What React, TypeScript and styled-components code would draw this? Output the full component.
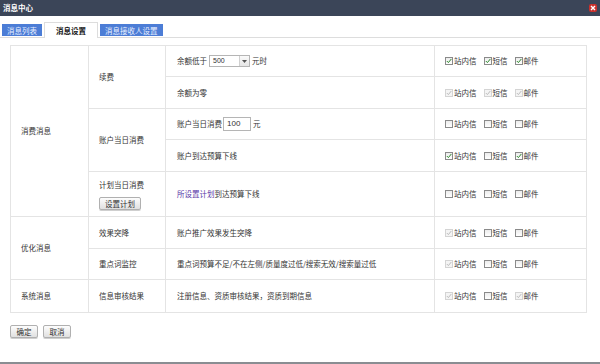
import React from 'react';
import styled, { createGlobalStyle } from 'styled-components';

const GlobalStyle = createGlobalStyle`
  html, body {
    margin: 0;
    padding: 0;
    background: #ffffff;
  }
  body {
    font-family: "Noto Sans CJK SC", "Liberation Sans", sans-serif;
    font-size: 7.5px;
    color: #333333;
  }
`;

const Page = styled.div`
  width: 600px;
  height: 364px;
  display: flex;
  flex-direction: column;
  overflow: hidden;
`;

const TitleBar = styled.div`
  height: 16px;
  background: #3b4558;
  display: flex;
  align-items: center;
  justify-content: space-between;
  padding: 0 3px 0 3px;
`;

const Title = styled.span`
  color: #ffffff;
  font-weight: bold;
  font-size: 7.5px;
  line-height: 16px;
`;

const CloseButton = styled.span`
  width: 8px;
  height: 8px;
  border-radius: 2px;
  background: #c9302c;
  display: flex;
  align-items: center;
  justify-content: center;
`;

const TabBar = styled.div`
  margin-top: 6px;
  height: 15px;
  display: flex;
  align-items: flex-end;
  gap: 2px;
  padding-left: 2px;
  border-bottom: 1px solid #dddddd;
`;

const Tab = styled.div<{ $active?: boolean }>`
  height: ${(p) => (p.$active ? '16px' : '12px')};
  margin-bottom: ${(p) => (p.$active ? '-1px' : '1px')};
  padding: 0 ${(p) => (p.$active ? '11px' : '5px')};
  display: flex;
  align-items: center;
  font-size: 7.5px;
  background: ${(p) => (p.$active ? '#ffffff' : '#4c7dd6')};
  color: ${(p) => (p.$active ? '#111111' : '#e8efff')};
  font-weight: ${(p) => (p.$active ? 'bold' : 'normal')};
  border: ${(p) => (p.$active ? '1px solid #dddddd' : 'none')};
  border-bottom: none;
  box-sizing: border-box;
`;

const Content = styled.div`
  padding: 7px 14px 0 10px;
`;

const Table = styled.table`
  width: 576px;
  border-collapse: collapse;
  border: 1px solid #e4e4e4;
  table-layout: fixed;
`;

const Row = styled.tr<{ $h: number }>`
  height: ${(p) => p.$h}px;
`;

const Cell = styled.td<{ $pl?: number }>`
  border: 1px solid #e4e4e4;
  padding: 0 0 0 ${(p) => p.$pl ?? 10}px;
  vertical-align: middle;
  line-height: 12px;
  white-space: nowrap;
`;

const Inline = styled.div`
  display: flex;
  align-items: center;
`;

const SelectBox = styled.div`
  width: 41px;
  height: 12px;
  box-sizing: border-box;
  border: 1px solid #b5b5b5;
  margin: 0 2px 0 2px;
  display: flex;
  align-items: center;
  background: #fff;
`;

const SelectValue = styled.span`
  flex: 1;
  padding-left: 3px;
  font-size: 7px;
  font-family: "Liberation Sans", sans-serif;
`;

const SelectArrow = styled.span`
  width: 9px;
  height: 100%;
  border-left: 1px solid #d0d0d0;
  background: linear-gradient(#fafafa, #e6e6e6);
  display: flex;
  align-items: center;
  justify-content: center;
`;

const TextInput = styled.div`
  width: 28px;
  height: 14px;
  box-sizing: border-box;
  border: 1px solid #b5b5b5;
  margin: 0 2px 0 1px;
  padding-left: 3px;
  display: flex;
  align-items: center;
  font-family: "Liberation Sans", sans-serif;
  font-size: 8px;
`;

const Link = styled.span`
  color: #5a3aa8;
`;

const SmallButton = styled.button<{ $w?: number }>`
  font-family: "Noto Sans CJK SC", sans-serif;
  font-size: 7.5px;
  color: #333;
  padding: 0;
  height: 13px;
  width: ${(p) => p.$w ?? 28}px;
  border: 1px solid #b0b0b0;
  border-radius: 2px;
  background: linear-gradient(#fdfdfd, #e0e0e0);
  box-shadow: 0 1px 0 #cfcfcf;
  line-height: 11px;
`;

const PlanStack = styled.div`
  display: flex;
  flex-direction: column;
  align-items: flex-start;
  gap: 6px;
`;

const ChannelGroup = styled.div`
  display: flex;
  align-items: center;
  gap: 7px;
`;

const Channel = styled.label`
  display: flex;
  align-items: center;
  gap: 1px;
  color: #333;
`;

const Box = styled.span<{ $disabled?: boolean }>`
  width: 8px;
  height: 8px;
  box-sizing: border-box;
  border: 1px solid ${(p) => (p.$disabled ? '#d4d4d4' : '#8a8a8a')};
  background: ${(p) => (p.$disabled ? '#f4f4f4' : 'linear-gradient(#ececec, #ffffff)')};
  display: flex;
  align-items: center;
  justify-content: center;
`;

const Actions = styled.div`
  display: flex;
  gap: 5px;
  padding: 12px 0 0 10px;
`;

const BottomBar = styled.div`
  margin-top: auto;
  height: 2px;
  background: #8a8d92;
`;

type State = 'on' | 'off' | 'dis';

const Check = ({ state, label }: { state: State; label: string }) => (
  <Channel>
    <Box $disabled={state === 'dis'}>
      {state !== 'off' && (
        <svg width="6" height="6" viewBox="0 0 6 6">
          <path
            d="M0.8 3 L2.4 4.6 L5.3 1"
            fill="none"
            stroke={state === 'dis' ? '#bdbdbd' : '#2f8a2f'}
            strokeWidth="1"
          />
        </svg>
      )}
    </Box>
    {label}
  </Channel>
);

const Channels = ({ s }: { s: [State, State, State] }) => (
  <ChannelGroup>
    <Check state={s[0]} label="站内信" />
    <Check state={s[1]} label="短信" />
    <Check state={s[2]} label="邮件" />
  </ChannelGroup>
);

export default function App() {
  return (
    <Page>
      <GlobalStyle />
      <TitleBar>
        <Title>消息中心</Title>
        <CloseButton>
          <svg width="6" height="6" viewBox="0 0 6 6">
            <path d="M1 1 L5 5 M5 1 L1 5" stroke="#ffffff" strokeWidth="1.4" />
          </svg>
        </CloseButton>
      </TitleBar>
      <TabBar>
        <Tab>消息列表</Tab>
        <Tab $active>消息设置</Tab>
        <Tab>消息接收人设置</Tab>
      </TabBar>
      <Content>
        <Table>
          <colgroup>
            <col style={{ width: 78 }} />
            <col style={{ width: 77 }} />
            <col style={{ width: 269 }} />
            <col style={{ width: 152 }} />
          </colgroup>
          <tbody>
            <Row $h={31}>
              <Cell rowSpan={5}>消费消息</Cell>
              <Cell rowSpan={2}>续费</Cell>
              <Cell $pl={11}>
                <Inline>
                  余额低于
                  <SelectBox>
                    <SelectValue>500</SelectValue>
                    <SelectArrow>
                      <svg width="5" height="3" viewBox="0 0 5 3">
                        <path d="M0 0 H5 L2.5 3 Z" fill="#555" />
                      </svg>
                    </SelectArrow>
                  </SelectBox>
                  元时
                </Inline>
              </Cell>
              <Cell>
                <Channels s={['on', 'on', 'on']} />
              </Cell>
            </Row>
            <Row $h={32}>
              <Cell $pl={11}>余额为零</Cell>
              <Cell>
                <Channels s={['dis', 'dis', 'dis']} />
              </Cell>
            </Row>
            <Row $h={31}>
              <Cell rowSpan={2}>账户当日消费</Cell>
              <Cell $pl={11}>
                <Inline>
                  账户当日消费
                  <TextInput>100</TextInput>
                  元
                </Inline>
              </Cell>
              <Cell>
                <Channels s={['off', 'off', 'off']} />
              </Cell>
            </Row>
            <Row $h={32}>
              <Cell $pl={11}>账户到达预算下线</Cell>
              <Cell>
                <Channels s={['on', 'off', 'on']} />
              </Cell>
            </Row>
            <Row $h={45}>
              <Cell>
                <PlanStack>
                  计划当日消费
                  <SmallButton $w={42}>设置计划</SmallButton>
                </PlanStack>
              </Cell>
              <Cell $pl={11}>
                <Link>所设置计划</Link>到达预算下线
              </Cell>
              <Cell>
                <Channels s={['off', 'off', 'off']} />
              </Cell>
            </Row>
            <Row $h={32}>
              <Cell rowSpan={2}>优化消息</Cell>
              <Cell>效果突降</Cell>
              <Cell $pl={11}>账户推广效果发生突降</Cell>
              <Cell>
                <Channels s={['dis', 'off', 'off']} />
              </Cell>
            </Row>
            <Row $h={31}>
              <Cell>重点词监控</Cell>
              <Cell $pl={11}>重点词预算不足/不在左侧/质量度过低/搜索无效/搜索量过低</Cell>
              <Cell>
                <Channels s={['dis', 'off', 'off']} />
              </Cell>
            </Row>
            <Row $h={33}>
              <Cell>系统消息</Cell>
              <Cell>信息审核结果</Cell>
              <Cell $pl={11}>注册信息、资质审核结果，资质到期信息</Cell>
              <Cell>
                <Channels s={['dis', 'off', 'dis']} />
              </Cell>
            </Row>
          </tbody>
        </Table>
      </Content>
      <Actions>
        <SmallButton>确定</SmallButton>
        <SmallButton>取消</SmallButton>
      </Actions>
      <BottomBar />
    </Page>
  );
}
